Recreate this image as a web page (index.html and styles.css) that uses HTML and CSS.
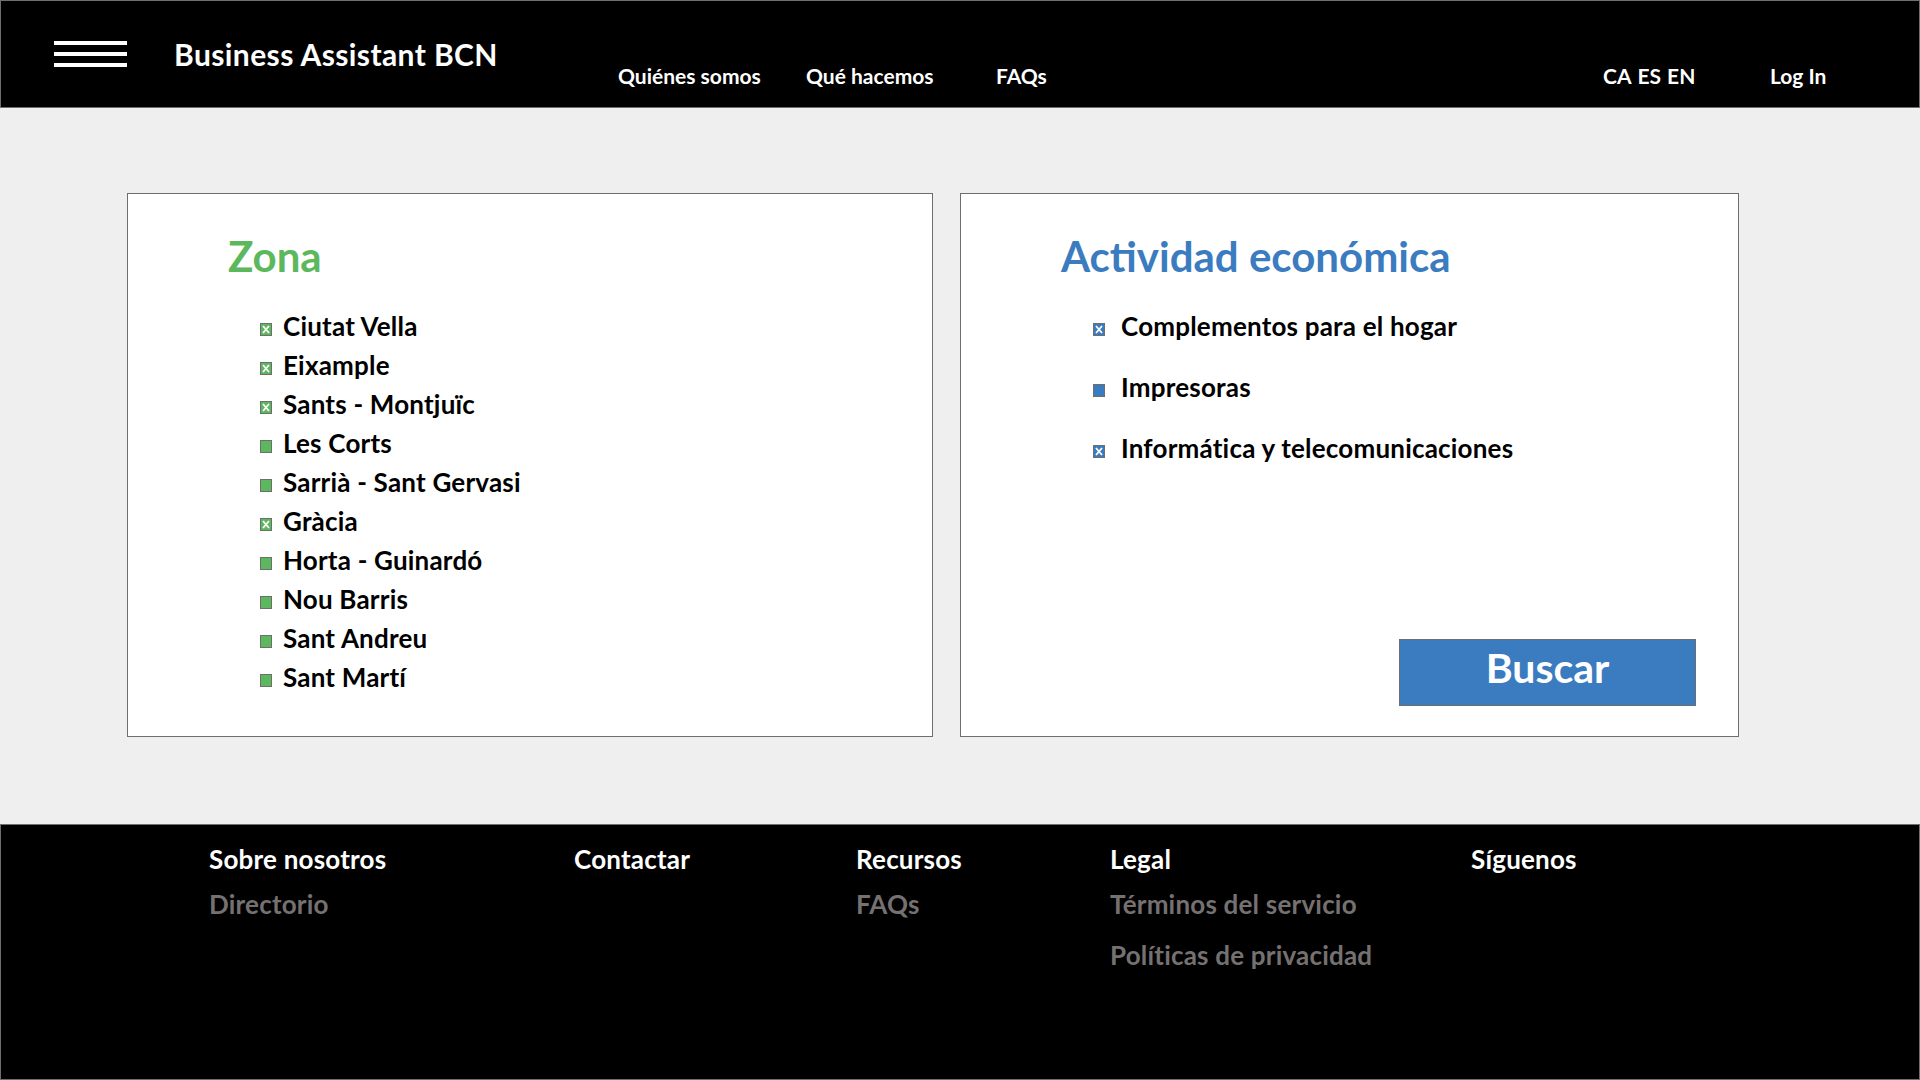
FILE: index.html
```html
<!DOCTYPE html>
<html lang="es">
<head>
<meta charset="utf-8">
<title>Business Assistant BCN</title>
<link rel="stylesheet" href="styles.css">
</head>
<body>
<header class="topbar">
  <div class="brand">
    <div class="burger"><span></span><span></span><span></span></div>
    <div class="title">Business Assistant BCN</div>
  </div>
  <nav class="nav">
    <a class="nav-link nav-1">Quiénes somos</a>
    <a class="nav-link nav-2">Qué hacemos</a>
    <a class="nav-link nav-3">FAQs</a>
  </nav>
  <div class="langs"><span>CA</span><span>ES</span><span>EN</span></div>
  <div class="login">Log In</div>
</header>

<main class="content">
  <section class="card card-zona">
    <h2 class="card-title green">Zona</h2>
    <ul class="list list-zona">
      <li><span class="box g"><svg viewBox="0 0 10 11"><path d="M2 2 L8 9 M8 2 L2 9"/></svg></span>Ciutat Vella</li>
      <li><span class="box g"><svg viewBox="0 0 10 11"><path d="M2 2 L8 9 M8 2 L2 9"/></svg></span>Eixample</li>
      <li><span class="box g"><svg viewBox="0 0 10 11"><path d="M2 2 L8 9 M8 2 L2 9"/></svg></span>Sants - Montjuïc</li>
      <li><span class="box g"></span>Les Corts</li>
      <li><span class="box g"></span>Sarrià - Sant Gervasi</li>
      <li><span class="box g"><svg viewBox="0 0 10 11"><path d="M2 2 L8 9 M8 2 L2 9"/></svg></span>Gràcia</li>
      <li><span class="box g"></span>Horta - Guinardó</li>
      <li><span class="box g"></span>Nou Barris</li>
      <li><span class="box g"></span>Sant Andreu</li>
      <li><span class="box g"></span>Sant Martí</li>
    </ul>
  </section>

  <section class="card card-act">
    <h2 class="card-title blue">Actividad económica</h2>
    <ul class="list list-act">
      <li><span class="box b"><svg viewBox="0 0 10 11"><path d="M2 2 L8 9 M8 2 L2 9"/></svg></span>Complementos para el hogar</li>
      <li><span class="box b"></span>Impresoras</li>
      <li><span class="box b"><svg viewBox="0 0 10 11"><path d="M2 2 L8 9 M8 2 L2 9"/></svg></span>Informática y telecomunicaciones</li>
    </ul>
    <button class="search-btn">Buscar</button>
  </section>
</main>

<footer class="footer">
  <div class="fcol fcol-1">
    <div class="fhead">Sobre nosotros</div>
    <a class="flink">Directorio</a>
  </div>
  <div class="fcol fcol-2">
    <div class="fhead">Contactar</div>
  </div>
  <div class="fcol fcol-3">
    <div class="fhead">Recursos</div>
    <a class="flink">FAQs</a>
  </div>
  <div class="fcol fcol-4">
    <div class="fhead">Legal</div>
    <a class="flink">Términos del servicio</a>
    <a class="flink">Políticas de privacidad</a>
  </div>
  <div class="fcol fcol-5">
    <div class="fhead">Síguenos</div>
  </div>
</footer>
</body>
</html>
```

FILE: styles.css
```css
* { box-sizing: border-box; }
html, body { margin: 0; padding: 0; }
body {
  width: 1920px;
  height: 1080px;
  background: #efefef;
  font-family: Lato, "Open Sans", "Liberation Sans", sans-serif;
  font-weight: 700;
  color: #000;
  display: flex;
  flex-direction: column;
  overflow: hidden;
}

/* Header */
.topbar {
  height: 108px;
  background: #000;
  border: 1px solid #6e6e6e;
  display: flex;
  align-items: flex-start;
  padding-left: 53px;
  color: #fff;
  flex: none;
}
.brand {
  width: 564px;
  display: flex;
  align-items: flex-start;
}
.burger {
  width: 73px;
  margin-top: 40px;
  display: flex;
  flex-direction: column;
  gap: 7px;
}
.burger span {
  display: block;
  height: 4px;
  background: #fff;
}
.title {
  margin-left: 47px;
  margin-top: 36px;
  font-size: 30px;
  line-height: 34px;
  letter-spacing: 0.4px;
  white-space: nowrap;
}
.nav {
  display: flex;
  margin-top: 62px;
}
.nav-link {
  font-size: 21px;
  line-height: 25px;
  white-space: nowrap;
}
.nav-1 { width: 188px; }
.nav-2 { width: 190px; }
.langs {
  margin-left: auto;
  width: 167px;
  margin-top: 62px;
  font-size: 21px;
  line-height: 25px;
  white-space: nowrap;
  display: flex;
  gap: 6px;
}
.login {
  width: 149px;
  margin-top: 62px;
  font-size: 21px;
  line-height: 25px;
}

/* Main */
.content {
  height: 716px;
  flex: none;
  display: flex;
  gap: 27px;
  padding: 85px 0 0 127px;
  align-items: flex-start;
}
.card {
  background: #fff;
  border: 1px solid #6e6e6e;
  height: 544px;
  padding: 38px 0 0 100px;
  display: flex;
  flex-direction: column;
}
.card-zona { width: 806px; }
.card-act { width: 779px; }
.card-title {
  margin: 0;
  font-size: 42px;
  line-height: 48px;
  font-weight: 700;
}
.green { color: #5cb85c; }
.blue { color: #3b7bc0; }

.list {
  list-style: none;
  margin: 27px 0 0 0;
  padding: 0 0 0 32px;
  font-size: 26px;
  line-height: 39px;
  letter-spacing: 0.2px;
}
.list li {
  display: block;
  white-space: nowrap;
}
.list-act li + li { margin-top: 22px; }

.box {
  display: inline-block;
  vertical-align: baseline;
  width: 12px;
  height: 13px;
  border: 1px solid #6e6e6e;
  margin-right: 11px;
}
.list-act .box { margin-right: 16px; }
.box.g { background: #5cb85c; }
.box.b { background: #3b7bc0; }
.box svg {
  display: block;
  width: 10px;
  height: 11px;
}
.box svg path {
  stroke: #fff;
  stroke-width: 1.8;
  fill: none;
}

.search-btn {
  margin-top: auto;
  align-self: flex-end;
  margin-right: 42px;
  margin-bottom: 30px;
  width: 297px;
  height: 67px;
  background: #3b7bc0;
  border: 1px solid #6e6e6e;
  color: #fff;
  font-family: Lato, "Open Sans", "Liberation Sans", sans-serif;
  font-weight: 700;
  font-size: 41px;
  line-height: 55px;
  padding: 0 0 10px 0;
}

/* Footer */
.footer {
  height: 256px;
  flex: none;
  background: #000;
  border: 1px solid #6e6e6e;
  display: flex;
  padding: 19px 0 0 208px;
}
.fcol {
  display: flex;
  flex-direction: column;
}
.fcol-1 { width: 365px; }
.fcol-2 { width: 282px; }
.fcol-3 { width: 254px; }
.fcol-4 { width: 361px; }
.fhead {
  color: #fff;
  font-size: 26px;
  line-height: 30px;
  letter-spacing: 0.2px;
  white-space: nowrap;
}
.flink {
  color: #767171;
  font-size: 26px;
  line-height: 51px;
  letter-spacing: 0.2px;
  white-space: nowrap;
}
.fhead + .flink { margin-top: 5px; }
```
